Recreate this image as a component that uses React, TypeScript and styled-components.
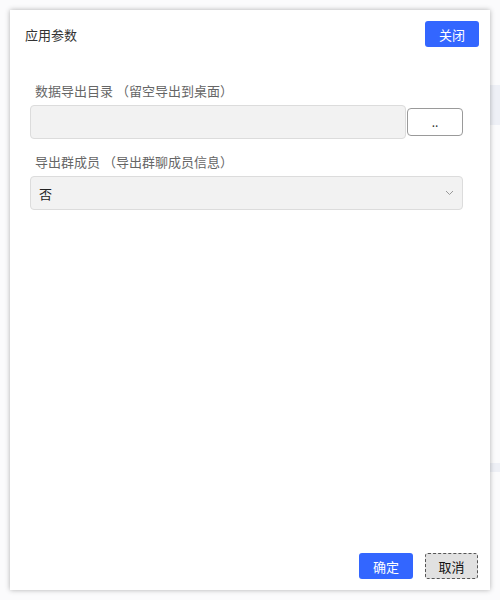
import React from "react";
import styled, { createGlobalStyle } from "styled-components";

const Global = createGlobalStyle`
  html, body { margin: 0; padding: 0; background: #fbfbfc; }
  body { font-family: "Noto Sans CJK SC", "Noto Sans", sans-serif; font-size: 13px; color: #333; }
  * { box-sizing: border-box; }
`;

const Page = styled.div`
  width: 500px;
  height: 600px;
  padding: 10px;
  position: relative;
  overflow: hidden;
`;

const Backdrop = styled.div<{ $top: number; $h: number }>`
  position: absolute;
  right: 0;
  width: 12px;
  background: #eef0f6;
  top: ${(p) => p.$top}px;
  height: ${(p) => p.$h}px;
`;

const Dialog = styled.div`
  position: relative;
  width: 480px;
  height: 580px;
  background: #fff;
  box-shadow: 0 0 5px rgba(0, 0, 0, 0.3);
  display: flex;
  flex-direction: column;
`;

const Header = styled.div`
  display: flex;
  align-items: center;
  justify-content: space-between;
  padding: 11px 11px 0 15px;
`;

const Title = styled.div`
  font-size: 13px;
  color: #333;
`;

const Button = styled.button<{ $primary?: boolean }>`
  width: ${(p) => (p.$primary ? 54 : 53)}px;
  height: 26px;
  border-radius: 3px;
  font-family: inherit;
  font-size: 13px;
  line-height: 1;
  cursor: pointer;
  padding: 0;
  border: ${(p) => (p.$primary ? "none" : "1px dashed #555")};
  background: ${(p) => (p.$primary ? "#3366ff" : "#e1e1e1")};
  color: ${(p) => (p.$primary ? "#fff" : "#111")};
`;

const Body = styled.div`
  flex: 1;
  padding: 35px 27px 0 20px;
  display: flex;
  flex-direction: column;
`;

const Label = styled.div`
  padding-left: 5px;
  color: #666;
  font-size: 13px;
  line-height: 18px;
  margin-bottom: 5px;
`;

const Row = styled.div`
  display: flex;
  align-items: center;
  gap: 1px;
  margin-bottom: 14px;
`;

const Input = styled.div`
  flex: 1;
  height: 34px;
  background: #f2f2f2;
  border: 1px solid #dcdcdc;
  border-radius: 4px;
`;

const BrowseButton = styled.button`
  width: 56px;
  height: 28px;
  background: #fff;
  border: 1px solid #9a9a9a;
  border-radius: 4px;
  font-family: inherit;
  font-size: 12px;
  color: #333;
  padding: 0;
  line-height: 1;
`;

const Select = styled.div`
  height: 34px;
  background: #f2f2f2;
  border: 1px solid #dcdcdc;
  border-radius: 4px;
  display: flex;
  align-items: center;
  justify-content: space-between;
  padding: 0 8px 0 8px;
  color: #222;
  font-size: 13px;
`;

const Footer = styled.div`
  display: flex;
  justify-content: flex-end;
  gap: 12px;
  padding: 0 12px 11px 0;
`;

export default function App() {
  return (
    <>
      <Global />
      <Page>
        <Backdrop $top={85} $h={40} />
        <Backdrop $top={463} $h={9} />
        <Dialog>
          <Header>
            <Title>应用参数</Title>
            <Button $primary>关闭</Button>
          </Header>
          <Body>
            <Label>数据导出目录 （留空导出到桌面）</Label>
            <Row>
              <Input />
              <BrowseButton>..</BrowseButton>
            </Row>
            <Label>导出群成员 （导出群聊成员信息）</Label>
            <Select>
              <span>否</span>
              <svg width="9" height="6" viewBox="0 0 9 6">
                <path d="M1 1l3.5 3.5L8 1" fill="none" stroke="#999" strokeWidth="1" />
              </svg>
            </Select>
          </Body>
          <Footer>
            <Button $primary>确定</Button>
            <Button>取消</Button>
          </Footer>
        </Dialog>
      </Page>
    </>
  );
}
